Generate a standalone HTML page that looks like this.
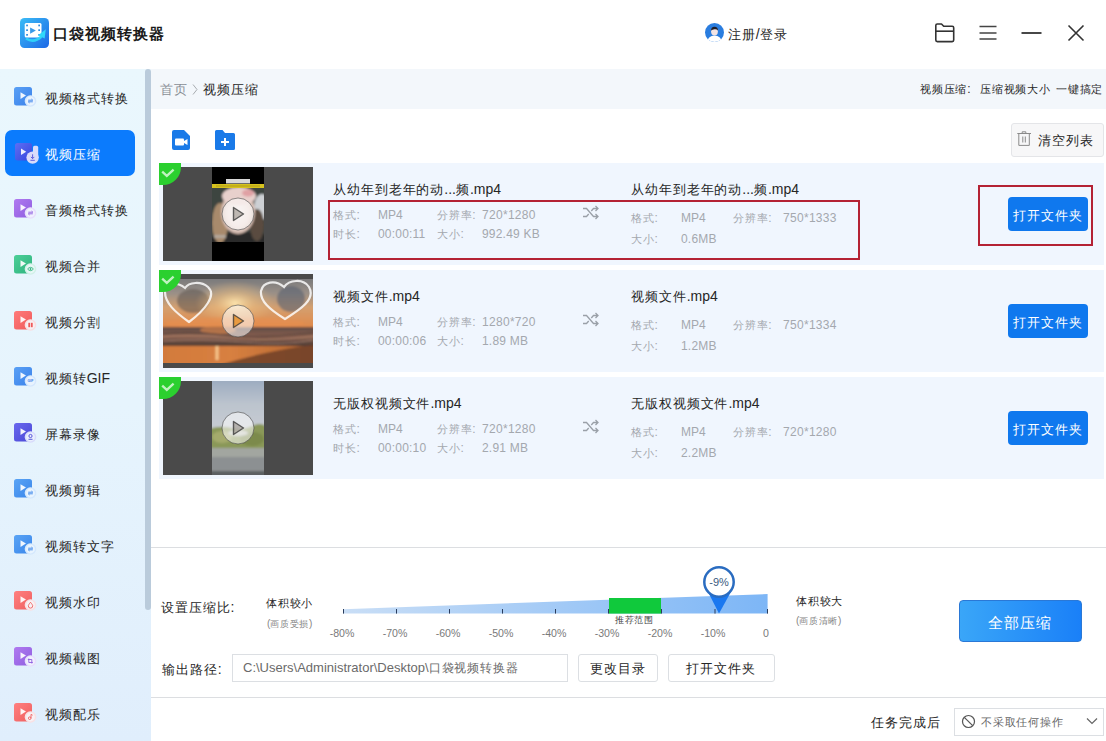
<!DOCTYPE html>
<html><head><meta charset="utf-8">
<style>
*{margin:0;padding:0;box-sizing:border-box}
html,body{width:1106px;height:741px;overflow:hidden;background:#fff}
body{position:relative;font-family:"Liberation Sans",sans-serif;color:#262626;font-size:14px}
.a{position:absolute;white-space:nowrap}
.t{line-height:1}
.cj{font-size:.93em;letter-spacing:.07em}
</style></head><body>

<!-- TOP BAR -->
<div class="a" style="left:0;top:0;width:1106px;height:69px;background:#fff"></div>
<svg class="a" style="left:20px;top:18px" width="29" height="30" viewBox="0 0 29 30">
  <defs><linearGradient id="lg" x1="0" y1="0" x2="1" y2="1"><stop offset="0" stop-color="#3cbcf6"/><stop offset="1" stop-color="#1c68e6"/></linearGradient></defs>
  <rect x="0" y="0" width="29" height="30" rx="4.5" fill="url(#lg)"/>
  <rect x="4.7" y="5" width="16.8" height="14.4" rx="1.5" fill="#fff"/>
  <g fill="#2a8ae0"><rect x="6.2" y="6.6" width="1.7" height="1.7"/><rect x="6.2" y="11.3" width="1.7" height="1.7"/><rect x="6.2" y="16" width="1.7" height="1.7"/>
  <rect x="18.3" y="6.6" width="1.7" height="1.7"/><rect x="18.3" y="11.3" width="1.7" height="1.7"/><rect x="18.3" y="16" width="1.7" height="1.7"/></g>
  <path d="M10.1 9.5L15.9 12.6L10.1 15.7z" fill="#3a9ae8"/>
  <path d="M6 20.5Q14 25.5 21.5 18.5" fill="none" stroke="#30d8fa" stroke-width="2.6" opacity=".9"/>
  <path d="M18.2 17.2L25.8 11.2L24.6 20.6z" fill="#30d8fa"/>
</svg>
<div class="a t" style="left:53px;top:26px;font-size:16px;font-weight:bold;color:#1a1a1a"><span class="cj">口袋视频转换器</span></div>

<svg class="a" style="left:704.5px;top:23px" width="19" height="19" viewBox="0 0 19 19">
  <defs><clipPath id="av"><circle cx="9.5" cy="9.5" r="9.5"/></clipPath></defs>
  <circle cx="9.5" cy="9.5" r="9.5" fill="#2a7ddf"/>
  <g clip-path="url(#av)">
   <path d="M2 19.5Q3 12.5 9.5 12.5T17 19.5z" fill="#fff"/>
   <ellipse cx="9.5" cy="8.6" rx="3.4" ry="4" fill="#f3e4e4"/>
   <path d="M6 7.6Q6 3.8 9.5 3.8T13 7.6Q11.5 5.8 9.5 6.2T6 7.6z" fill="#1c1c28"/>
  </g>
</svg>
<div class="a t" style="left:728px;top:27px;font-size:14px;color:#262626"><span class="cj">注册</span>/<span class="cj">登录</span></div>

<!-- window icons -->
<svg class="a" style="left:930px;top:18px" width="30" height="30" viewBox="0 0 30 30">
  <path d="M5.8 7.5a1.5 1.5 0 0 1 1.5-1.5h4.2l2.2 2.3h8.5a1.5 1.5 0 0 1 1.5 1.5v12.3a1.5 1.5 0 0 1-1.5 1.5H7.3a1.5 1.5 0 0 1-1.5-1.5z" fill="none" stroke="#333" stroke-width="1.6" stroke-linejoin="round"/>
  <path d="M5.8 13.2H23.7" stroke="#333" stroke-width="1.6"/>
</svg>
<svg class="a" style="left:975px;top:18px" width="30" height="30" viewBox="0 0 30 30">
  <path d="M4.5 8.5h17M4.5 15h17M4.5 21h17" stroke="#444" stroke-width="1.6"/>
</svg>
<svg class="a" style="left:1018px;top:18px" width="30" height="30" viewBox="0 0 30 30">
  <path d="M3.5 15h20" stroke="#333" stroke-width="1.8"/>
</svg>
<svg class="a" style="left:1062px;top:18px" width="30" height="30" viewBox="0 0 30 30">
  <path d="M6.5 7.5l15 15M21.5 7.5l-15 15" stroke="#333" stroke-width="1.6"/>
</svg>

<!-- SIDEBAR -->
<div class="a" style="left:0;top:69px;width:151px;height:672px;background:linear-gradient(180deg,#eaf7fd,#e6f4fd 50%,#e0eefc)"></div>
<div class="a" style="left:145px;top:69px;width:6px;height:541px;border-radius:3px;background:#bacbdb"></div>
<div class="a" style="left:5px;top:130px;width:130px;height:46px;border-radius:7px;background:#0b7bfd"></div>

<svg class="a" style="left:14px;top:87px" width="26" height="24" viewBox="0 0 26 24">
<defs><linearGradient id="g0" x1="0" y1="0" x2="1" y2="1"><stop offset="0" stop-color="#5aa0f5"/><stop offset="1" stop-color="#3a82ea"/></linearGradient></defs>
<rect x="0" y="0" width="18" height="18.5" rx="2.5" fill="url(#g0)"/>
<path d="M6.5 5.3v6.6l5.5-3.3z" fill="#fff" opacity=".92"/>
<circle cx="16.5" cy="14" r="5.8" fill="#f6fbff"/>
<circle cx="16.5" cy="14" r="5.8" fill="#5aa0f5" opacity=".22"/>
<circle cx="16.5" cy="14" r="4.4" fill="#f6fbff" opacity=".6"/>
<path d="M14.2 13.2h4.5l-1.2-1.1M18.8 14.8h-4.5l1.2 1.1" fill="none" stroke="#3a82ea" stroke-width=".9"/>
</svg>
<div class="a t" style="left:45px;top:91px;font-size:14px;color:#262626"><span class="cj">视频格式转换</span></div>
<svg class="a" style="left:14px;top:142px" width="26" height="24" viewBox="0 0 26 24">
<defs><linearGradient id="ag" x1="0" y1="0" x2="1" y2="1"><stop offset="0" stop-color="#6c6cf2"/><stop offset="1" stop-color="#3c3cd8"/></linearGradient></defs>
<rect x="1" y="1" width="17" height="17.5" rx="2.5" fill="url(#ag)" opacity=".85"/>
<path d="M7 6.5v6.5l5.2-3.25z" fill="#fff" opacity=".9"/>
<g fill="#e4e2fb" opacity=".95"><rect x="19" y="3.8" width="5.2" height="13" rx="1.6"/><circle cx="18.6" cy="15.6" r="6.2"/></g>
<path d="M18.6 12.3v4.2M16.9 14.9l1.7 1.7 1.7-1.7M16.4 18.3h4.4" fill="none" stroke="#5050d8" stroke-width=".9"/>
</svg>
<div class="a t" style="left:45px;top:147px;font-size:14px;color:#fff"><span class="cj">视频压缩</span></div>
<svg class="a" style="left:14px;top:199px" width="26" height="24" viewBox="0 0 26 24">
<defs><linearGradient id="g2" x1="0" y1="0" x2="1" y2="1"><stop offset="0" stop-color="#b07af0"/><stop offset="1" stop-color="#8f5ee0"/></linearGradient></defs>
<rect x="0" y="0" width="18" height="18.5" rx="2.5" fill="url(#g2)"/>
<path d="M6.5 5.3v6.6l5.5-3.3z" fill="#fff" opacity=".92"/>
<circle cx="16.5" cy="14" r="5.8" fill="#f6fbff"/>
<circle cx="16.5" cy="14" r="5.8" fill="#b07af0" opacity=".22"/>
<circle cx="16.5" cy="14" r="4.4" fill="#f6fbff" opacity=".6"/>
<path d="M14.3 13.2h4.5l-1.2-1.1M18.8 14.8h-4.5l1.2 1.1" fill="none" stroke="#8f5ee0" stroke-width=".9"/>
</svg>
<div class="a t" style="left:45px;top:203px;font-size:14px;color:#262626"><span class="cj">音频格式转换</span></div>
<svg class="a" style="left:14px;top:255px" width="26" height="24" viewBox="0 0 26 24">
<defs><linearGradient id="g3" x1="0" y1="0" x2="1" y2="1"><stop offset="0" stop-color="#4ccf98"/><stop offset="1" stop-color="#2fb37e"/></linearGradient></defs>
<rect x="0" y="0" width="18" height="18.5" rx="2.5" fill="url(#g3)"/>
<path d="M6.5 5.3v6.6l5.5-3.3z" fill="#fff" opacity=".92"/>
<circle cx="16.5" cy="14" r="5.8" fill="#f6fbff"/>
<circle cx="16.5" cy="14" r="5.8" fill="#4ccf98" opacity=".22"/>
<circle cx="16.5" cy="14" r="4.4" fill="#f6fbff" opacity=".6"/>
<path d="M13.6 14c1.6-2.2 4.2-2.2 5.8 0c-1.6 2.2-4.2 2.2-5.8 0z" fill="none" stroke="#2fb37e" stroke-width=".9"/><circle cx="16.5" cy="14" r=".9" fill="#2fb37e"/>
</svg>
<div class="a t" style="left:45px;top:259px;font-size:14px;color:#262626"><span class="cj">视频合并</span></div>
<svg class="a" style="left:14px;top:311px" width="26" height="24" viewBox="0 0 26 24">
<defs><linearGradient id="g4" x1="0" y1="0" x2="1" y2="1"><stop offset="0" stop-color="#ff7b7b"/><stop offset="1" stop-color="#ef5a5a"/></linearGradient></defs>
<rect x="0" y="0" width="18" height="18.5" rx="2.5" fill="url(#g4)"/>
<path d="M6.5 5.3v6.6l5.5-3.3z" fill="#fff" opacity=".92"/>
<circle cx="16.5" cy="14" r="5.8" fill="#f6fbff"/>
<circle cx="16.5" cy="14" r="5.8" fill="#ff7b7b" opacity=".22"/>
<circle cx="16.5" cy="14" r="4.4" fill="#f6fbff" opacity=".6"/>
<rect x="14.3" y="11.8" width="1.8" height="4.4" fill="#ef5a5a"/><rect x="16.9" y="11.8" width="1.8" height="4.4" fill="#ef5a5a"/>
</svg>
<div class="a t" style="left:45px;top:315px;font-size:14px;color:#262626"><span class="cj">视频分割</span></div>
<svg class="a" style="left:14px;top:367px" width="26" height="24" viewBox="0 0 26 24">
<defs><linearGradient id="g5" x1="0" y1="0" x2="1" y2="1"><stop offset="0" stop-color="#5aa0f5"/><stop offset="1" stop-color="#3a82ea"/></linearGradient></defs>
<rect x="0" y="0" width="18" height="18.5" rx="2.5" fill="url(#g5)"/>
<path d="M6.5 5.3v6.6l5.5-3.3z" fill="#fff" opacity=".92"/>
<circle cx="16.5" cy="14" r="5.8" fill="#f6fbff"/>
<circle cx="16.5" cy="14" r="5.8" fill="#5aa0f5" opacity=".22"/>
<circle cx="16.5" cy="14" r="4.4" fill="#f6fbff" opacity=".6"/>
<text x="16.5" y="15.4" font-size="3.6" text-anchor="middle" font-family="Liberation Sans" font-weight="bold" fill="#3a82ea">GIF</text>
</svg>
<div class="a t" style="left:45px;top:371px;font-size:14px;color:#262626"><span class="cj">视频转</span>GIF</div>
<svg class="a" style="left:14px;top:423px" width="26" height="24" viewBox="0 0 26 24">
<defs><linearGradient id="g6" x1="0" y1="0" x2="1" y2="1"><stop offset="0" stop-color="#6a68ee"/><stop offset="1" stop-color="#4a48d6"/></linearGradient></defs>
<rect x="0" y="0" width="18" height="18.5" rx="2.5" fill="url(#g6)"/>
<path d="M6.5 5.3v6.6l5.5-3.3z" fill="#fff" opacity=".92"/>
<circle cx="16.5" cy="14" r="5.8" fill="#f6fbff"/>
<circle cx="16.5" cy="14" r="5.8" fill="#6a68ee" opacity=".22"/>
<circle cx="16.5" cy="14" r="4.4" fill="#f6fbff" opacity=".6"/>
<circle cx="16.5" cy="13" r="1.6" fill="none" stroke="#4a48d6" stroke-width=".9"/><path d="M14.5 16.3h4" stroke="#4a48d6" stroke-width=".9"/>
</svg>
<div class="a t" style="left:45px;top:427px;font-size:14px;color:#262626"><span class="cj">屏幕录像</span></div>
<svg class="a" style="left:14px;top:479px" width="26" height="24" viewBox="0 0 26 24">
<defs><linearGradient id="g7" x1="0" y1="0" x2="1" y2="1"><stop offset="0" stop-color="#5aa4f5"/><stop offset="1" stop-color="#3a86ea"/></linearGradient></defs>
<rect x="0" y="0" width="18" height="18.5" rx="2.5" fill="url(#g7)"/>
<path d="M6.5 5.3v6.6l5.5-3.3z" fill="#fff" opacity=".92"/>
<circle cx="16.5" cy="14" r="5.8" fill="#f6fbff"/>
<circle cx="16.5" cy="14" r="5.8" fill="#5aa4f5" opacity=".22"/>
<circle cx="16.5" cy="14" r="4.4" fill="#f6fbff" opacity=".6"/>
<path d="M14.2 13.2h4.5l-1.2-1.1M18.8 14.8h-4.5l1.2 1.1" fill="none" stroke="#3a86ea" stroke-width=".9"/>
</svg>
<div class="a t" style="left:45px;top:483px;font-size:14px;color:#262626"><span class="cj">视频剪辑</span></div>
<svg class="a" style="left:14px;top:535px" width="26" height="24" viewBox="0 0 26 24">
<defs><linearGradient id="g8" x1="0" y1="0" x2="1" y2="1"><stop offset="0" stop-color="#5aa4f5"/><stop offset="1" stop-color="#3a86ea"/></linearGradient></defs>
<rect x="0" y="0" width="18" height="18.5" rx="2.5" fill="url(#g8)"/>
<path d="M6.5 5.3v6.6l5.5-3.3z" fill="#fff" opacity=".92"/>
<circle cx="16.5" cy="14" r="5.8" fill="#f6fbff"/>
<circle cx="16.5" cy="14" r="5.8" fill="#5aa4f5" opacity=".22"/>
<circle cx="16.5" cy="14" r="4.4" fill="#f6fbff" opacity=".6"/>
<path d="M14.2 13.2h4.5l-1.2-1.1M18.8 14.8h-4.5l1.2 1.1" fill="none" stroke="#3a86ea" stroke-width=".9"/>
</svg>
<div class="a t" style="left:45px;top:539px;font-size:14px;color:#262626"><span class="cj">视频转文字</span></div>
<svg class="a" style="left:14px;top:591px" width="26" height="24" viewBox="0 0 26 24">
<defs><linearGradient id="g9" x1="0" y1="0" x2="1" y2="1"><stop offset="0" stop-color="#ff8080"/><stop offset="1" stop-color="#ef5f5f"/></linearGradient></defs>
<rect x="0" y="0" width="18" height="18.5" rx="2.5" fill="url(#g9)"/>
<path d="M6.5 5.3v6.6l5.5-3.3z" fill="#fff" opacity=".92"/>
<circle cx="16.5" cy="14" r="5.8" fill="#f6fbff"/>
<circle cx="16.5" cy="14" r="5.8" fill="#ff8080" opacity=".22"/>
<circle cx="16.5" cy="14" r="4.4" fill="#f6fbff" opacity=".6"/>
<path d="M16.5 11.3c1.6 2 2.2 2.8 2.2 3.6a2.2 2.2 0 0 1-4.4 0c0-.8.6-1.6 2.2-3.6z" fill="none" stroke="#ef5f5f" stroke-width=".9"/>
</svg>
<div class="a t" style="left:45px;top:595px;font-size:14px;color:#262626"><span class="cj">视频水印</span></div>
<svg class="a" style="left:14px;top:647px" width="26" height="24" viewBox="0 0 26 24">
<defs><linearGradient id="g10" x1="0" y1="0" x2="1" y2="1"><stop offset="0" stop-color="#b07af0"/><stop offset="1" stop-color="#8f5ee0"/></linearGradient></defs>
<rect x="0" y="0" width="18" height="18.5" rx="2.5" fill="url(#g10)"/>
<path d="M6.5 5.3v6.6l5.5-3.3z" fill="#fff" opacity=".92"/>
<circle cx="16.5" cy="14" r="5.8" fill="#f6fbff"/>
<circle cx="16.5" cy="14" r="5.8" fill="#b07af0" opacity=".22"/>
<circle cx="16.5" cy="14" r="4.4" fill="#f6fbff" opacity=".6"/>
<path d="M14.8 11.5v4h4M13.8 12.5h4v4" fill="none" stroke="#8f5ee0" stroke-width=".9"/>
</svg>
<div class="a t" style="left:45px;top:651px;font-size:14px;color:#262626"><span class="cj">视频截图</span></div>
<svg class="a" style="left:14px;top:703px" width="26" height="24" viewBox="0 0 26 24">
<defs><linearGradient id="g11" x1="0" y1="0" x2="1" y2="1"><stop offset="0" stop-color="#ff8080"/><stop offset="1" stop-color="#ef5f5f"/></linearGradient></defs>
<rect x="0" y="0" width="18" height="18.5" rx="2.5" fill="url(#g11)"/>
<path d="M6.5 5.3v6.6l5.5-3.3z" fill="#fff" opacity=".92"/>
<circle cx="16.5" cy="14" r="5.8" fill="#f6fbff"/>
<circle cx="16.5" cy="14" r="5.8" fill="#ff8080" opacity=".22"/>
<circle cx="16.5" cy="14" r="4.4" fill="#f6fbff" opacity=".6"/>
<circle cx="15.7" cy="15.2" r="1.3" fill="none" stroke="#ef5f5f" stroke-width=".9"/><path d="M17 15.2v-3.8l1.6 .8" fill="none" stroke="#ef5f5f" stroke-width=".9"/>
</svg>
<div class="a t" style="left:45px;top:707px;font-size:14px;color:#262626"><span class="cj">视频配乐</span></div>

<!-- BREADCRUMB -->
<div class="a" style="left:151px;top:69px;width:955px;height:40px;background:#f3f7fb"></div>
<div class="a t" style="left:160px;top:82px;font-size:14px;color:#8a8f96"><span class="cj">首页</span></div>
<svg class="a" style="left:192px;top:83px" width="6" height="13" viewBox="0 0 6 13"><path d="M1 1.5l4 5-4 5" fill="none" stroke="#a8acb0" stroke-width="1"/></svg>
<div class="a t" style="left:203px;top:82px;font-size:14px;color:#262626"><span class="cj">视频压缩</span></div>
<div class="a t" style="left:920px;top:83px;font-size:12px;color:#262626"><span class="cj">视频压缩</span>:</div>
<div class="a t" style="left:980px;top:83px;font-size:12px;color:#262626"><span class="cj">压缩视频大小</span></div>
<div class="a t" style="left:1056px;top:83px;font-size:12px;color:#262626"><span class="cj">一键搞定</span></div>

<!-- toolbar -->
<svg class="a" style="left:172px;top:130px" width="20" height="20" viewBox="0 0 20 20">
  <path d="M2 0h10l6 6v12a2 2 0 0 1-2 2H2a2 2 0 0 1-2-2V2a2 2 0 0 1 2-2z" fill="#1a7ae8"/>
  <rect x="3" y="8.5" width="9" height="7" rx="1" fill="#fff"/>
  <path d="M12 11l3.5-2v6L12 13z" fill="#fff"/>
</svg>
<svg class="a" style="left:215px;top:130px" width="20" height="20" viewBox="0 0 20 20">
  <path d="M1.5 0h6l2.5 3h8.5a1.5 1.5 0 0 1 1.5 1.5v14a1.5 1.5 0 0 1-1.5 1.5h-17A1.5 1.5 0 0 1 0 18.5v-17A1.5 1.5 0 0 1 1.5 0z" fill="#1a7ae8"/>
  <path d="M10 8v8M6 12h8" stroke="#fff" stroke-width="2"/>
</svg>

<div class="a" style="left:1010.5px;top:123px;width:93px;height:33.5px;background:#f7f7f8;border:1px solid #e4e5e8;border-radius:3px"></div>
<svg class="a" style="left:1016px;top:130px" width="16" height="17" viewBox="0 0 16 17">
  <path d="M1.3 3.5H15M6.2 3.5V1.8H9.8V3.5M2.8 3.5V15.4H13.3V3.5M6.8 6.5V12.5M9.3 6.5V12.5" fill="none" stroke="#8a8a8a" stroke-width="1"/>
</svg>
<div class="a t" style="left:1038px;top:133px;font-size:14px;color:#262626"><span class="cj">清空列表</span></div>

<div class="a" style="left:159px;top:163px;width:945px;height:102px;background:#f0f6fe"></div>
<div class="a" style="left:163px;top:167px;width:150px;height:94px;background:#4a4a4a"></div>
<svg class="a" style="left:212px;top:167px" width="52" height="94" viewBox="0 0 52 94">
 <defs><clipPath id="c1"><rect x="0" y="21" width="52" height="54"/></clipPath>
 <radialGradient id="face" cx=".5" cy=".5" r=".5"><stop offset="0" stop-color="#f2e8e6"/><stop offset=".7" stop-color="#e8d6d0"/><stop offset="1" stop-color="#d0b4a8"/></radialGradient></defs>
 <rect width="52" height="94" fill="#000"/>
 <filter id="bl1" x="-10%" y="-10%" width="120%" height="120%"><feGaussianBlur stdDeviation="1"/></filter>
 <g clip-path="url(#c1)"><g filter="url(#bl1)">
  <rect x="-5" y="16" width="62" height="64" fill="#3c4441"/>
  <ellipse cx="50" cy="40" rx="8" ry="13" fill="#cdd0d4"/>
  <path d="M-4 70Q26 60 56 68V80H-4z" fill="#2a2c2a"/>
  <ellipse cx="8" cy="56" rx="8" ry="20" fill="#a88a6c"/>
  <ellipse cx="45" cy="58" rx="7" ry="16" fill="#5a4c40"/>
  <ellipse cx="26" cy="45" rx="17" ry="22" fill="url(#face)"/>
  <ellipse cx="27" cy="29" rx="17" ry="9" fill="#e8d0cc"/>
  <ellipse cx="36" cy="26" rx="6" ry="3.5" fill="#d87a84" opacity=".55"/>
  <rect x="2" y="68" width="12" height="3" fill="#bbb" opacity=".6"/>
 </g></g>
 <rect x="0" y="17" width="52" height="4" fill="#d6c21e"/>
 <rect x="4" y="18.5" width="44" height="1" fill="#6a5a10" opacity=".35"/>
 <rect x="14" y="12" width="24" height="4.5" fill="#f0f0f0" opacity=".9"/>
</svg>
<svg class="a" style="left:220px;top:196px" width="36" height="36" viewBox="0 0 36 36"><circle cx="18" cy="18" r="16" fill="rgba(255,255,255,.55)" stroke="rgba(70,70,70,.6)" stroke-width="1"/><path d="M13.5 11.5v13l10-6.5z" fill="rgba(120,110,100,.45)" stroke="rgba(50,50,50,.75)" stroke-width="1.4" stroke-linejoin="round"/></svg>
<svg class="a" style="left:159px;top:163px" width="22" height="22" viewBox="0 0 22 22"><path d="M0 0H22V4A18 18 0 0 1 4 22H0z" fill="#2bd02f"/><path d="M3.2 8.6l4.6 4.3 6.8-6.3" fill="none" stroke="#c0f2c0" stroke-width="2.3"/></svg>
<div class="a t" style="left:333px;top:182px;font-size:14px;color:#262626"><span class="cj">从幼年到老年的动</span>...<span class="cj">频</span>.mp4</div>
<div class="a t" style="left:333px;top:209px;font-size:12px;color:#a4a8ae"><span class="cj">格式</span>:</div>
<div class="a t" style="left:378px;top:209px;font-size:12px;color:#a4a8ae">MP4</div>
<div class="a t" style="left:437px;top:209px;font-size:12px;color:#a4a8ae"><span class="cj">分辨率</span>:</div>
<div class="a t" style="left:482px;top:209px;font-size:12px;letter-spacing:.3px;color:#a4a8ae">720*1280</div>
<div class="a t" style="left:333px;top:228px;font-size:12px;color:#a4a8ae"><span class="cj">时长</span>:</div>
<div class="a t" style="left:378px;top:228px;font-size:12px;letter-spacing:.2px;color:#a4a8ae">00:00:11</div>
<div class="a t" style="left:437px;top:228px;font-size:12px;color:#a4a8ae"><span class="cj">大小</span>:</div>
<div class="a t" style="left:482px;top:228px;font-size:12px;letter-spacing:.2px;color:#a4a8ae">992.49 KB</div>
<svg class="a" style="left:582px;top:205px" width="18" height="15" viewBox="0 0 18 15"><path d="M1 3.5h3.5l7 8H16M1 11.5h3.5l2.2-2.5M9.3 6l2.2-2.5H16M13.5 1l2.5 2.5-2.5 2.5M13.5 9l2.5 2.5-2.5 2.5" fill="none" stroke="#9aa0a8" stroke-width="1.3"/></svg>
<div class="a t" style="left:631px;top:182px;font-size:14px;color:#262626"><span class="cj">从幼年到老年的动</span>...<span class="cj">频</span>.mp4</div>
<div class="a t" style="left:631px;top:212px;font-size:12px;color:#a4a8ae"><span class="cj">格式</span>:</div>
<div class="a t" style="left:681px;top:212px;font-size:12px;color:#a4a8ae">MP4</div>
<div class="a t" style="left:733px;top:212px;font-size:12px;color:#a4a8ae"><span class="cj">分辨率</span>:</div>
<div class="a t" style="left:783px;top:212px;font-size:12px;letter-spacing:.3px;color:#a4a8ae">750*1333</div>
<div class="a t" style="left:631px;top:233px;font-size:12px;color:#a4a8ae"><span class="cj">大小</span>:</div>
<div class="a t" style="left:681px;top:233px;font-size:12px;letter-spacing:.2px;color:#a4a8ae">0.6MB</div>
<div class="a" style="left:1008px;top:197px;width:80px;height:34px;border-radius:4px;background:#0f78ee"></div>
<div class="a t" style="left:1013px;top:208px;font-size:14px;color:#fff"><span class="cj">打开文件夹</span></div>
<div class="a" style="left:328px;top:200px;width:532px;height:60px;border:2px solid #b42234"></div>
<div class="a" style="left:978px;top:185px;width:115px;height:61px;border:2px solid #b42234"></div>
<div class="a" style="left:159px;top:270px;width:945px;height:102px;background:#f0f6fe"></div>
<div class="a" style="left:163px;top:274px;width:150px;height:94px;background:#4a4a4a"></div>
<svg class="a" style="left:163px;top:279px" width="150" height="84" viewBox="0 0 150 84">
 <defs>
  <linearGradient id="sky" x1="0" y1="0" x2="0" y2="1"><stop offset="0" stop-color="#727478"/><stop offset=".35" stop-color="#9a9088"/><stop offset=".62" stop-color="#d4a070"/><stop offset="1" stop-color="#e0894a"/></linearGradient>
  <radialGradient id="glow" cx=".5" cy=".5" r=".5"><stop offset="0" stop-color="#ffe8b0" stop-opacity=".95"/><stop offset=".5" stop-color="#f0c080" stop-opacity=".5"/><stop offset="1" stop-color="#f0c080" stop-opacity="0"/></radialGradient>
  <linearGradient id="sea" x1="0" y1="0" x2="0" y2="1"><stop offset="0" stop-color="#5e4a44"/><stop offset=".5" stop-color="#8a6050"/><stop offset="1" stop-color="#4a3a34"/></linearGradient>
  <linearGradient id="sand" x1="0" y1="0" x2="1" y2="0"><stop offset="0" stop-color="#d27a3c"/><stop offset=".45" stop-color="#d88040"/><stop offset="1" stop-color="#b06430"/></linearGradient>
 </defs>
 <filter id="bl2" x="-5%" y="-5%" width="110%" height="110%"><feGaussianBlur stdDeviation=".8"/></filter>
 <clipPath id="c2"><rect width="150" height="84"/></clipPath>
 <g clip-path="url(#c2)"><g filter="url(#bl2)">
 <rect x="-4" y="-4" width="158" height="52" fill="url(#sky)"/>
 <ellipse cx="30" cy="22" rx="16" ry="12" fill="#5e5650" opacity=".55"/>
 <ellipse cx="128" cy="20" rx="14" ry="13" fill="#586070" opacity=".6"/>
 <ellipse cx="72" cy="24" rx="40" ry="22" fill="url(#glow)"/>
 <ellipse cx="72" cy="44" rx="70" ry="6" fill="#e89050" opacity=".55"/>
 <rect x="-4" y="48" width="158" height="19" fill="url(#sea)"/>
 <ellipse cx="55" cy="51" rx="18" ry="4" fill="#d08048" opacity=".7"/>
 <path d="M-4 58Q30 55 70 59T154 57" fill="none" stroke="#c89878" stroke-width="1.2" opacity=".55"/>
 <path d="M-4 67H154V88H-4z" fill="url(#sand)"/>
 <path d="M50 88Q100 72 154 65V88z" fill="#6e4028" opacity=".85"/>
 <rect x="52.5" y="67" width="3" height="14" fill="#ffd8a0" opacity=".8"/>
 <path d="M0 55Q30 52 60 56T150 54" fill="none" stroke="#4a3a34" stroke-width="1.5" opacity=".6"/>
 <path d="M0 62Q40 59 80 63T150 61" fill="none" stroke="#c8a090" stroke-width="1" opacity=".5"/>
 <rect x="-4" y="67" width="158" height="21" fill="none"/>
 </g></g>
 <path d="M26 43C12 33 2 24 2 13C2 5 12 1 22 9C26 3 38 2 45 8C54 16 42 31 26 43z" fill="none" stroke="rgba(255,255,255,.82)" stroke-width="2.2"/>
 <path d="M122 40C106 30 97 22 98 12C100 3 112 0 121 8C126 1 140 -1 146 8C153 20 138 30 122 40z" fill="none" stroke="rgba(255,255,255,.82)" stroke-width="2.2"/>
</svg>
<svg class="a" style="left:220px;top:303px" width="36" height="36" viewBox="0 0 36 36"><circle cx="18" cy="18" r="16" fill="rgba(255,255,255,.55)" stroke="rgba(70,70,70,.6)" stroke-width="1"/><path d="M13.5 11.5v13l10-6.5z" fill="#e89a40" stroke="rgba(50,50,50,.75)" stroke-width="1.4" stroke-linejoin="round"/></svg>
<svg class="a" style="left:159px;top:270px" width="22" height="22" viewBox="0 0 22 22"><path d="M0 0H22V4A18 18 0 0 1 4 22H0z" fill="#2bd02f"/><path d="M3.2 8.6l4.6 4.3 6.8-6.3" fill="none" stroke="#c0f2c0" stroke-width="2.3"/></svg>
<div class="a t" style="left:333px;top:289px;font-size:14px;color:#262626"><span class="cj">视频文件</span>.mp4</div>
<div class="a t" style="left:333px;top:316px;font-size:12px;color:#a4a8ae"><span class="cj">格式</span>:</div>
<div class="a t" style="left:378px;top:316px;font-size:12px;color:#a4a8ae">MP4</div>
<div class="a t" style="left:437px;top:316px;font-size:12px;color:#a4a8ae"><span class="cj">分辨率</span>:</div>
<div class="a t" style="left:482px;top:316px;font-size:12px;letter-spacing:.3px;color:#a4a8ae">1280*720</div>
<div class="a t" style="left:333px;top:335px;font-size:12px;color:#a4a8ae"><span class="cj">时长</span>:</div>
<div class="a t" style="left:378px;top:335px;font-size:12px;letter-spacing:.2px;color:#a4a8ae">00:00:06</div>
<div class="a t" style="left:437px;top:335px;font-size:12px;color:#a4a8ae"><span class="cj">大小</span>:</div>
<div class="a t" style="left:482px;top:335px;font-size:12px;letter-spacing:.2px;color:#a4a8ae">1.89 MB</div>
<svg class="a" style="left:582px;top:312px" width="18" height="15" viewBox="0 0 18 15"><path d="M1 3.5h3.5l7 8H16M1 11.5h3.5l2.2-2.5M9.3 6l2.2-2.5H16M13.5 1l2.5 2.5-2.5 2.5M13.5 9l2.5 2.5-2.5 2.5" fill="none" stroke="#9aa0a8" stroke-width="1.3"/></svg>
<div class="a t" style="left:631px;top:289px;font-size:14px;color:#262626"><span class="cj">视频文件</span>.mp4</div>
<div class="a t" style="left:631px;top:319px;font-size:12px;color:#a4a8ae"><span class="cj">格式</span>:</div>
<div class="a t" style="left:681px;top:319px;font-size:12px;color:#a4a8ae">MP4</div>
<div class="a t" style="left:733px;top:319px;font-size:12px;color:#a4a8ae"><span class="cj">分辨率</span>:</div>
<div class="a t" style="left:783px;top:319px;font-size:12px;letter-spacing:.3px;color:#a4a8ae">750*1334</div>
<div class="a t" style="left:631px;top:340px;font-size:12px;color:#a4a8ae"><span class="cj">大小</span>:</div>
<div class="a t" style="left:681px;top:340px;font-size:12px;letter-spacing:.2px;color:#a4a8ae">1.2MB</div>
<div class="a" style="left:1008px;top:304px;width:80px;height:34px;border-radius:4px;background:#0f78ee"></div>
<div class="a t" style="left:1013px;top:315px;font-size:14px;color:#fff"><span class="cj">打开文件夹</span></div>
<div class="a" style="left:159px;top:377px;width:945px;height:102px;background:#f0f6fe"></div>
<div class="a" style="left:163px;top:381px;width:150px;height:94px;background:#4a4a4a"></div>
<svg class="a" style="left:212px;top:381px" width="52" height="94" viewBox="0 0 52 94">
 <defs>
  <linearGradient id="sky3" x1="0" y1="0" x2="0" y2="1"><stop offset="0" stop-color="#98a8be"/><stop offset=".5" stop-color="#bcc4ce"/><stop offset="1" stop-color="#c8ccd2"/></linearGradient>
  <filter id="bl3" x="-10%" y="-10%" width="120%" height="120%"><feGaussianBlur stdDeviation=".9"/></filter>
  <clipPath id="c3"><rect width="52" height="94"/></clipPath>
 </defs>
 <g clip-path="url(#c3)"><g filter="url(#bl3)">
  <rect x="-4" y="-4" width="60" height="54" fill="url(#sky3)"/>
  <path d="M-4 48Q10 44 20 47T40 45T56 47V70H-4z" fill="#8a9858"/>
  <ellipse cx="10" cy="56" rx="10" ry="6" fill="#a4aa6c"/>
  <ellipse cx="40" cy="58" rx="12" ry="7" fill="#7c8a4c"/>
  <ellipse cx="26" cy="52" rx="10" ry="3" fill="#c4c6bc"/>
  <rect x="-4" y="67" width="60" height="9" fill="#a2a6a0"/>
  <rect x="-4" y="76" width="60" height="15" fill="#8c9092"/>
  <rect x="-4" y="90" width="60" height="8" fill="#5c6062"/>
 </g></g>
</svg>
<svg class="a" style="left:220px;top:410px" width="36" height="36" viewBox="0 0 36 36"><circle cx="18" cy="18" r="16" fill="rgba(255,255,255,.55)" stroke="rgba(70,70,70,.6)" stroke-width="1"/><path d="M13.5 11.5v13l10-6.5z" fill="rgba(120,110,100,.45)" stroke="rgba(50,50,50,.75)" stroke-width="1.4" stroke-linejoin="round"/></svg>
<svg class="a" style="left:159px;top:377px" width="22" height="22" viewBox="0 0 22 22"><path d="M0 0H22V4A18 18 0 0 1 4 22H0z" fill="#2bd02f"/><path d="M3.2 8.6l4.6 4.3 6.8-6.3" fill="none" stroke="#c0f2c0" stroke-width="2.3"/></svg>
<div class="a t" style="left:333px;top:396px;font-size:14px;color:#262626"><span class="cj">无版权视频文件</span>.mp4</div>
<div class="a t" style="left:333px;top:423px;font-size:12px;color:#a4a8ae"><span class="cj">格式</span>:</div>
<div class="a t" style="left:378px;top:423px;font-size:12px;color:#a4a8ae">MP4</div>
<div class="a t" style="left:437px;top:423px;font-size:12px;color:#a4a8ae"><span class="cj">分辨率</span>:</div>
<div class="a t" style="left:482px;top:423px;font-size:12px;letter-spacing:.3px;color:#a4a8ae">720*1280</div>
<div class="a t" style="left:333px;top:442px;font-size:12px;color:#a4a8ae"><span class="cj">时长</span>:</div>
<div class="a t" style="left:378px;top:442px;font-size:12px;letter-spacing:.2px;color:#a4a8ae">00:00:10</div>
<div class="a t" style="left:437px;top:442px;font-size:12px;color:#a4a8ae"><span class="cj">大小</span>:</div>
<div class="a t" style="left:482px;top:442px;font-size:12px;letter-spacing:.2px;color:#a4a8ae">2.91 MB</div>
<svg class="a" style="left:582px;top:419px" width="18" height="15" viewBox="0 0 18 15"><path d="M1 3.5h3.5l7 8H16M1 11.5h3.5l2.2-2.5M9.3 6l2.2-2.5H16M13.5 1l2.5 2.5-2.5 2.5M13.5 9l2.5 2.5-2.5 2.5" fill="none" stroke="#9aa0a8" stroke-width="1.3"/></svg>
<div class="a t" style="left:631px;top:396px;font-size:14px;color:#262626"><span class="cj">无版权视频文件</span>.mp4</div>
<div class="a t" style="left:631px;top:426px;font-size:12px;color:#a4a8ae"><span class="cj">格式</span>:</div>
<div class="a t" style="left:681px;top:426px;font-size:12px;color:#a4a8ae">MP4</div>
<div class="a t" style="left:733px;top:426px;font-size:12px;color:#a4a8ae"><span class="cj">分辨率</span>:</div>
<div class="a t" style="left:783px;top:426px;font-size:12px;letter-spacing:.3px;color:#a4a8ae">720*1280</div>
<div class="a t" style="left:631px;top:447px;font-size:12px;color:#a4a8ae"><span class="cj">大小</span>:</div>
<div class="a t" style="left:681px;top:447px;font-size:12px;letter-spacing:.2px;color:#a4a8ae">2.2MB</div>
<div class="a" style="left:1008px;top:411px;width:80px;height:34px;border-radius:4px;background:#0f78ee"></div>
<div class="a t" style="left:1013px;top:422px;font-size:14px;color:#fff"><span class="cj">打开文件夹</span></div>

<!-- SETTINGS -->
<div class="a" style="left:151px;top:547px;width:955px;height:1px;background:#dcdee1"></div>
<div class="a" style="left:151px;top:697px;width:955px;height:1px;background:#dcdee1"></div>

<div class="a t" style="left:161px;top:600px;font-size:14px;color:#262626"><span class="cj">设置压缩比</span>:</div>
<div class="a t" style="left:266px;top:597px;font-size:12px;color:#262626"><span class="cj">体积较小</span></div>
<div class="a t" style="left:267px;top:619px;font-size:10px;color:#858585">(<span class="cj">画质受损</span>)</div>
<div class="a t" style="left:796px;top:595px;font-size:12px;color:#262626"><span class="cj">体积较大</span></div>
<div class="a t" style="left:796px;top:616px;font-size:10px;color:#858585">(<span class="cj">画质清晰</span>)</div>

<svg class="a" style="left:330px;top:560px" width="450" height="85" viewBox="0 0 450 85">
  <defs><linearGradient id="wg" x1="0" x2="1"><stop offset="0" stop-color="#c9def6"/><stop offset="1" stop-color="#7db6f6"/></linearGradient></defs>
  <path d="M13 49.3L437.6 34V53.6H13z" fill="url(#wg)"/>
  <rect x="279" y="38" width="52" height="15.6" fill="#10c93c"/>
  <g fill="#2a3c5c">
    <rect x="13" y="49" width="1" height="4.6"/><rect x="66" y="49" width="1" height="4.6"/><rect x="119" y="49" width="1" height="4.6"/>
    <rect x="172" y="49" width="1" height="4.6"/><rect x="225" y="49" width="1" height="4.6"/><rect x="278" y="49" width="1" height="4.6"/>
    <rect x="331" y="49" width="1" height="4.6"/><rect x="384.5" y="49" width="1" height="4.6"/><rect x="437" y="49" width="1" height="4.6"/>
  </g>
  <path d="M377 30L402 30L389 53.5z" fill="#1a78f0"/>
  <circle cx="389" cy="22" r="14.7" fill="#fff" stroke="#2a6cc0" stroke-width="2.5"/>
</svg>
<div class="a t" style="left:699px;width:40px;text-align:center;top:577px;font-size:11px;color:#3a5a80">-9%</div>
<div class="a t" style="left:615px;top:615px;font-size:10px;color:#444"><span class="cj">推荐范围</span></div>
<div class="a t" style="left:302.0px;width:80px;text-align:center;top:627.5px;font-size:10.6px;color:#7a7a7a">-80%</div>
<div class="a t" style="left:355.0px;width:80px;text-align:center;top:627.5px;font-size:10.6px;color:#7a7a7a">-70%</div>
<div class="a t" style="left:408.0px;width:80px;text-align:center;top:627.5px;font-size:10.6px;color:#7a7a7a">-60%</div>
<div class="a t" style="left:461.0px;width:80px;text-align:center;top:627.5px;font-size:10.6px;color:#7a7a7a">-50%</div>
<div class="a t" style="left:514.0px;width:80px;text-align:center;top:627.5px;font-size:10.6px;color:#7a7a7a">-40%</div>
<div class="a t" style="left:567.0px;width:80px;text-align:center;top:627.5px;font-size:10.6px;color:#7a7a7a">-30%</div>
<div class="a t" style="left:620.0px;width:80px;text-align:center;top:627.5px;font-size:10.6px;color:#7a7a7a">-20%</div>
<div class="a t" style="left:673.0px;width:80px;text-align:center;top:627.5px;font-size:10.6px;color:#7a7a7a">-10%</div>
<div class="a t" style="left:726.0px;width:80px;text-align:center;top:627.5px;font-size:10.6px;color:#7a7a7a">0</div>

<div class="a" style="left:959px;top:600px;width:123px;height:42px;border-radius:4px;border:1px solid #2a78d6;background:linear-gradient(90deg,#3aa6f8,#1a80f8)"></div>
<div class="a t" style="left:988px;top:615px;font-size:16px;color:#fff"><span class="cj">全部压缩</span></div>

<div class="a t" style="left:162px;top:662px;font-size:14px;color:#262626"><span class="cj">输出路径</span>:</div>
<div class="a" style="left:232px;top:654px;width:336px;height:28px;border:1px solid #dcdfe3;background:#fff"></div>
<div class="a t" style="left:243px;top:661px;font-size:13px;color:#6a6a6a">C:\Users\Administrator\Desktop\<span class="cj">口袋视频转换器</span></div>
<div class="a" style="left:578px;top:654px;width:80px;height:28px;border:1px solid #dcdfe3;border-radius:3px;background:#fff"></div>
<div class="a t" style="left:590px;top:661px;font-size:14px;color:#262626"><span class="cj">更改目录</span></div>
<div class="a" style="left:668px;top:654px;width:107px;height:28px;border:1px solid #dcdfe3;border-radius:3px;background:#fff"></div>
<div class="a t" style="left:686px;top:661px;font-size:14px;color:#262626"><span class="cj">打开文件夹</span></div>

<!-- bottom -->
<div class="a t" style="left:871px;top:715px;font-size:14px;color:#262626"><span class="cj">任务完成后</span></div>
<div class="a" style="left:954px;top:708px;width:150px;height:27.5px;border:1px solid #dcdfe3;background:#fff"></div>
<svg class="a" style="left:961px;top:714px" width="15" height="15" viewBox="0 0 15 15">
  <circle cx="7.5" cy="7.5" r="6" fill="none" stroke="#555" stroke-width="1.2"/><path d="M3.3 3.3l8.4 8.4" stroke="#555" stroke-width="1.2"/>
</svg>
<div class="a t" style="left:981px;top:716px;font-size:12px;color:#666"><span class="cj">不采取任何操作</span></div>
<svg class="a" style="left:1085px;top:716px" width="14" height="10" viewBox="0 0 14 10">
  <path d="M2 2.5l5 5 5-5" fill="none" stroke="#666" stroke-width="1.2"/>
</svg>

</body></html>
